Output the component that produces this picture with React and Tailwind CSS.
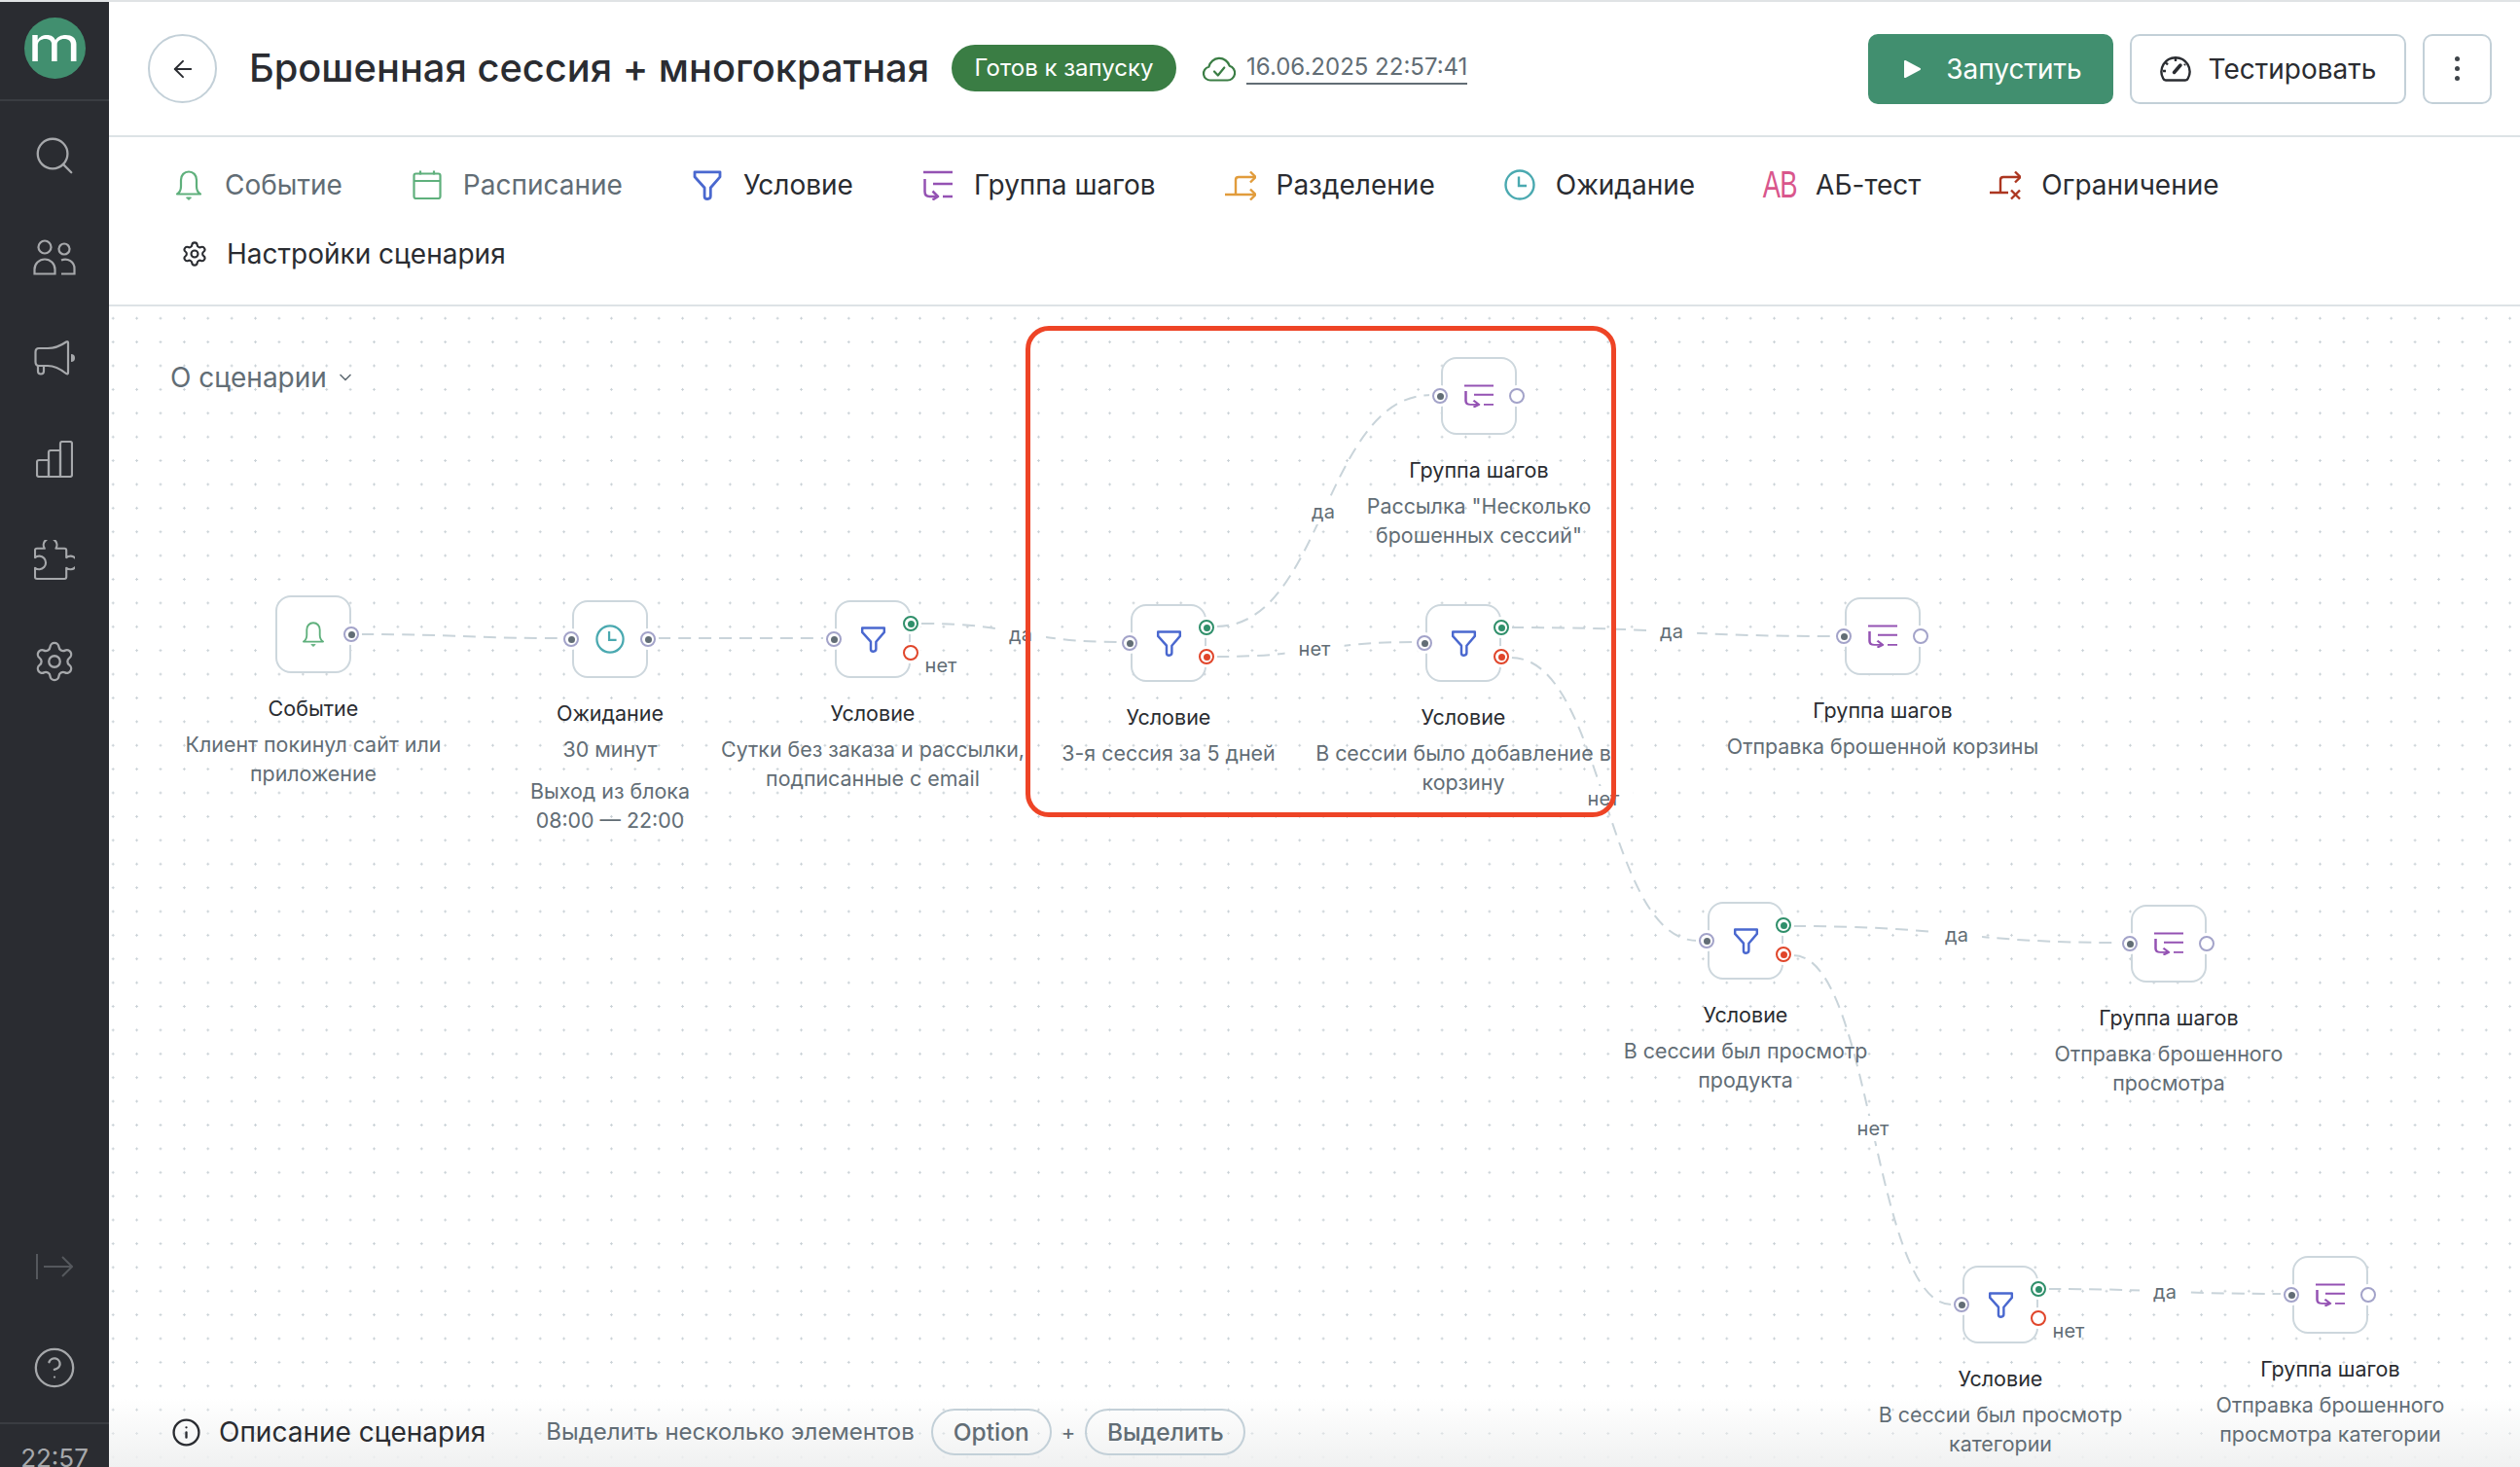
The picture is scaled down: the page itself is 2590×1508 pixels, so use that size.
import { ArrowLeft, ChevronDown, CircleHelp, Info, Search, Settings } from 'lucide-react';

const BellIcon = ({ className }) => (
  <svg viewBox="0 0 28 31" fill="none" stroke="#5fb07c" strokeWidth="2.2" strokeLinejoin="round" className={className}>
    <path d="M2 24.5c2.8-1.6 4-4 4-8V10c0-5 3.4-8.5 8-8.5s8 3.5 8 8.5v6.5c0 4 1.2 6.4 4 8z" />
    <path d="M11.5 28h5L14 30.5z" fill="#5fb07c" strokeWidth="1" />
  </svg>
);

const CalendarIcon = ({ className }) => (
  <svg viewBox="0 0 30 30" fill="none" stroke="#5fb07c" strokeWidth="2.2" className={className}>
    <rect x="1.5" y="3.5" width="27" height="25.5" rx="2" />
    <path d="M1.5 11h27M8 .5v4M22 .5v4" />
  </svg>
);

const FilterIcon = ({ className }) => (
  <svg viewBox="0 0 30 31" fill="none" stroke="#4a68cf" strokeWidth="2.8" strokeLinejoin="round" className={className}>
    <path d="M2 1.8h26v5L18.3 18v8.5q0 3-3.2 3-3 0-3-2.6V18L2 6.8z" />
  </svg>
);

const GroupIcon = ({ className }) => (
  <svg viewBox="0 0 30 31" preserveAspectRatio="none" fill="none" stroke="#9452b3" strokeWidth="2.5" strokeLinejoin="round" className={className}>
    <path d="M0 2h30M10 14h20M20 27h10" />
    <path d="M1.5 9v13q0 5 5 5h8" />
    <path d="M9.5 21.5l5.5 5.5-5.5 3.5" />
  </svg>
);

const SplitIcon = ({ className }) => (
  <svg viewBox="0 0 32 31" fill="none" stroke="#e19c3c" strokeWidth="2.4" className={className}>
    <path d="M0 25h31M11 25V10q0-3 3-3h17" />
    <path d="M26 1.5L31.5 7 26 12.5M26 19.5l5.5 5.5-5.5 5.5" />
  </svg>
);

const ClockIcon = ({ className }) => (
  <svg viewBox="0 0 32 32" fill="none" stroke="#4aa9b0" strokeWidth="2.4" className={className}>
    <circle cx="16" cy="16" r="14.5" />
    <path d="M15 7.5V17h8" />
  </svg>
);

const LimitIcon = ({ className }) => (
  <svg viewBox="0 0 32 31" fill="none" stroke="#ac3620" strokeWidth="2.4" className={className}>
    <path d="M0 23h19M11 23V10q0-3 3-3h17" />
    <path d="M26 1.5L31.5 7 26 12.5M22 20.5l9 9M31 20.5l-9 9" />
  </svg>
);

const CloudCheckIcon = ({ className }) => (
  <svg viewBox="0 0 36 27" fill="none" stroke="#3a7d44" strokeWidth="2.2" strokeLinejoin="round" className={className}>
    <path d="M9.5 25.5h17a7.5 7.5 0 0 0 2.2-14.7A11 11 0 0 0 7.4 11.7 7 7 0 0 0 9.5 25.5z" />
    <path d="M13 16.5l3.8 4 6.5-8" strokeLinecap="round" />
  </svg>
);

const GaugeIcon = ({ className }) => (
  <svg viewBox="0 0 32 27" fill="none" stroke="#2a2c31" strokeWidth="2.4" strokeLinejoin="round" className={className}>
    <path d="M6 25.5h20q2 0 2.8-2A14.5 14.5 0 1 0 3.2 23.5q.8 2 2.8 2z" />
    <path d="M14.5 17.5L21 10" strokeWidth="3.5" strokeLinecap="round" />
    <path d="M16 3v3M6 7.5l2 2M3 16h3M26 9l-1 1" />
  </svg>
);

const UsersIcon = () => (
  <svg viewBox="0 0 44 37" fill="none" stroke="#a6a8ab" strokeWidth="2.2" className="h-[37px] w-[44px]">
    <circle cx="12" cy="8" r="6.5" />
    <circle cx="32" cy="10" r="5.5" />
    <path d="M1.5 35.5V31a10.5 10.5 0 0 1 21 0v4.5z" />
    <path d="M29 21.5a9.5 9.5 0 0 1 13.5 9v5H29" />
  </svg>
);

const MegaphoneIcon = () => (
  <svg viewBox="0 0 42 36" fill="none" stroke="#a6a8ab" strokeWidth="2.2" strokeLinejoin="round" className="h-[36px] w-[42px]">
    <path d="M5 8h9c7 0 14-3 19-6.5q2-1 2 1v30.5q0 2-2 1C28 30 21 26 14 26H5q-3.5 0-3.5-4V12Q1.5 8 5 8z" />
    <path d="M4 26v5.5q0 3 3 3t3-3V26" />
    <path d="M38 14a4 4 0 0 1 0 8z" fill="#a6a8ab" stroke="none" />
  </svg>
);

const ChartIcon = () => (
  <svg viewBox="0 0 38 38" fill="none" stroke="#a6a8ab" strokeWidth="2.2" strokeLinejoin="round" className="h-[38px] w-[38px]">
    <path d="M3 20h10v17H3q-2 0-2-2V22q0-2 2-2z" />
    <path d="M13 12q0-2 2-2h10v27H13z" />
    <path d="M25 3q0-2 2-2h8q2 0 2 2v32q0 2-2 2H25z" />
  </svg>
);

const PuzzleIcon = () => (
  <svg viewBox="0 0 43 43" fill="none" stroke="#a6a8ab" strokeWidth="2.2" strokeLinejoin="round" className="h-[42px] w-[42px]">
    <path d="M3 41h29q2 0 2-2v-9.5a7 7 0 1 0 0-11V11q0-2-2-2h-9a7 7 0 1 0-12 0H3q-2 0-2 2v7.5a7 7 0 1 1 0 11V39q0 2 2 2z" />
  </svg>
);

const CollapseIcon = () => (
  <svg viewBox="0 0 38 26" fill="none" stroke="#55585d" strokeWidth="2" className="h-[26px] w-[38px]">
    <path d="M1 0v26M8 13h29M27 3l10 10-10 10" />
  </svg>
);

const SideItem = ({ children }) => (
  <div className="flex h-[104px] shrink-0 items-center justify-center">{children}</div>
);

const Sidebar = () => (
  <aside className="flex h-full w-[112px] shrink-0 flex-col overflow-hidden bg-[#2a2c31]">
    <div className="mb-[4px] flex h-[102px] shrink-0 items-center justify-center border-b-2 border-[#3a3d42] pb-[6px]">
      <div className="flex h-[63px] w-[63px] items-center justify-center rounded-full bg-[#418f6f] pb-[8px] text-[50px] leading-none font-normal text-white">
        <span className="scale-x-[1.25]">m</span>
      </div>
    </div>
    <SideItem><Search size={46} strokeWidth={1.2} color="#a6a8ab" /></SideItem>
    <SideItem><UsersIcon /></SideItem>
    <SideItem><MegaphoneIcon /></SideItem>
    <SideItem><ChartIcon /></SideItem>
    <SideItem><PuzzleIcon /></SideItem>
    <SideItem><Settings size={46} strokeWidth={1.2} color="#a6a8ab" /></SideItem>
    <div className="mt-auto"><SideItem><CollapseIcon /></SideItem></div>
    <SideItem><CircleHelp size={46} strokeWidth={1.2} color="#a6a8ab" /></SideItem>
    <div className="mt-[4px] h-[46px] shrink-0 border-t-2 border-[#3a3d42] pt-[19px] text-center text-[26px] leading-[32px] text-[#a6a8ab]">
      22:57
    </div>
  </aside>
);

const Header = () => (
  <header className="flex h-[139px] shrink-0 items-center border-b-2 border-[#dde3e6] pr-[29px] pl-[40px]">
    <button className="flex h-[71px] w-[71px] items-center justify-center rounded-full border-2 border-[#c3d0d8]">
      <ArrowLeft size={28} strokeWidth={1.7} color="#2a2c31" />
    </button>
    <h1 className="-mt-[2px] ml-[33px] text-[39.8px] leading-none font-medium whitespace-nowrap text-[#2a2c31]">
      Брошенная сессия + многократная
    </h1>
    <span className="-mt-[1px] ml-[23px] flex h-[48px] w-[231px] items-center justify-center rounded-full bg-[#3a7d44] text-[24px] text-white">
      Готов к запуску
    </span>
    <CloudCheckIcon className="ml-[26px] h-[27px] w-[36px]" />
    <span className="-mt-[2px] ml-[10px] border-b-2 border-[#626d75] text-[24px] leading-[32px] text-[#626d75]">
      16.06.2025 22:57:41
    </span>
    <div className="ml-auto flex gap-[17px]">
      <button className="flex h-[72px] w-[252px] items-center justify-center gap-[25px] rounded-[10px] bg-[#418f6f] pl-[4px] text-[28px] text-white">
        <svg viewBox="0 0 19 20" fill="white" stroke="white" strokeWidth="2" strokeLinejoin="round" className="h-[20px] w-[19px]">
          <path d="M2 2l15 8-15 8z" />
        </svg>
        Запустить
      </button>
      <button className="flex h-[72px] w-[284px] items-center justify-center gap-[18px] rounded-[10px] border-2 border-[#c3d0d8] text-[28px] text-[#2a2c31]">
        <GaugeIcon className="h-[27px] w-[32px]" />
        Тестировать
      </button>
      <button className="flex h-[72px] w-[71px] flex-col items-center justify-center gap-[5px] rounded-[10px] border-2 border-[#c3d0d8]">
        <span className="h-[5px] w-[5px] rounded-full bg-[#3f4449]" />
        <span className="h-[5px] w-[5px] rounded-full bg-[#3f4449]" />
        <span className="h-[5px] w-[5px] rounded-full bg-[#3f4449]" />
      </button>
    </div>
  </header>
);

const tools = [
  { label: 'Событие', icon: <BellIcon className="h-[31px] w-[28px]" />, muted: true },
  { label: 'Расписание', icon: <CalendarIcon className="h-[30px] w-[30px]" />, muted: true },
  { label: 'Условие', icon: <FilterIcon className="h-[31px] w-[30px]" /> },
  { label: 'Группа шагов', icon: <GroupIcon className="h-[31px] w-[30px]" /> },
  { label: 'Разделение', icon: <SplitIcon className="h-[31px] w-[32px]" /> },
  { label: 'Ожидание', icon: <ClockIcon className="h-[32px] w-[32px]" /> },
  {
    label: 'АБ-тест',
    icon: (
      <span className="scale-x-[0.72] font-['Liberation_Sans',sans-serif] text-[38px] leading-none font-normal tracking-[-1px] text-[#d9568c]">
        AB
      </span>
    ),
  },
  { label: 'Ограничение', icon: <LimitIcon className="h-[31px] w-[32px]" /> },
];

const Toolbar = () => (
  <div className="flex h-[174px] shrink-0 flex-wrap content-start gap-x-[71px] gap-y-[39px] border-b-2 border-[#dde3e6] pt-[33px] pl-[66px]">
    {tools.map((tool) => (
      <div key={tool.label} className="flex h-[32px] items-center gap-[21px]">
        <span className="flex h-[32px] w-[32px] items-center justify-center">{tool.icon}</span>
        <span className={`text-[28px] leading-none ${tool.muted ? 'text-[#626d75]' : 'text-[#2a2c31]'}`}>
          {tool.label}
        </span>
      </div>
    ))}
    <div className="flex h-[32px] items-center gap-[19px] pl-[8px]">
      <Settings size={28} strokeWidth={1.8} color="#2a2c31" />
      <span className="text-[28px] leading-none text-[#2a2c31]">Настройки сценария</span>
    </div>
  </div>
);

const filter = <FilterIcon className="h-[27px] w-[27px]" />;
const group = <GroupIcon className="h-[24px] w-[30px]" />;

// x is the center of the block, y its top, both from the canvas corner
const nodes = [
  { x: 210, y: 297, icon: <BellIcon className="h-[26px] w-[24px]" />, title: 'Событие', left: false, right: 'plain', lines: ['Клиент покинул сайт или', 'приложение'] },
  { x: 515, y: 302, icon: <ClockIcon className="h-[30px] w-[30px]" />, title: 'Ожидание', left: true, right: 'plain', lines: ['30 минут'], extra: ['Выход из блока', '08:00 — 22:00'] },
  { x: 785, y: 302, icon: filter, title: 'Условие', left: true, right: 'branch', redEmpty: true, lines: ['Сутки без заказа и рассылки,', 'подписанные с email'] },
  { x: 1089, y: 306, icon: filter, title: 'Условие', left: true, right: 'branch', lines: ['3-я сессия за 5 дней'] },
  { x: 1392, y: 306, icon: filter, title: 'Условие', left: true, right: 'branch', lines: ['В сессии было добавление в', 'корзину'] },
  { x: 1408, y: 52, icon: group, title: 'Группа шагов', left: true, right: 'empty', lines: ['Рассылка "Несколько', 'брошенных сессий"'] },
  { x: 1823, y: 299, icon: group, title: 'Группа шагов', left: true, right: 'empty', lines: ['Отправка брошенной корзины'] },
  { x: 1682, y: 612, icon: filter, title: 'Условие', left: true, right: 'branch', lines: ['В сессии был просмотр', 'продукта'] },
  { x: 2117, y: 615, icon: group, title: 'Группа шагов', left: true, right: 'empty', lines: ['Отправка брошенного', 'просмотра'] },
  { x: 1944, y: 986, icon: filter, title: 'Условие', left: true, right: 'branch', redEmpty: true, lines: ['В сессии был просмотр', 'категории'] },
  { x: 2283, y: 976, icon: group, title: 'Группа шагов', left: true, right: 'empty', lines: ['Отправка брошенного', 'просмотра категории'] },
];

const edges = [
  [259, 337, 466, 341],
  [564, 341, 736, 341],
  [835, 326, 1040, 345],
  [1138, 329, 1359, 91],
  [1138, 360, 1343, 345],
  [1441, 330, 1773, 339],
  [1441, 361, 1633, 652],
  [1731, 637, 2068, 654],
  [1731, 667, 1894, 1026],
  [1993, 1010, 2234, 1015],
];

const labels = [
  { x: 937, y: 337, text: 'да' },
  { x: 855, y: 369, text: 'нет', bare: true },
  { x: 1248, y: 211, text: 'да' },
  { x: 1239, y: 352, text: 'нет' },
  { x: 1606, y: 334, text: 'да' },
  { x: 1536, y: 506, text: 'нет' },
  { x: 1899, y: 646, text: 'да' },
  { x: 1813, y: 845, text: 'нет' },
  { x: 2113, y: 1013, text: 'да' },
  { x: 2014, y: 1053, text: 'нет', bare: true },
];

const Port = ({ color, dot, className }) => (
  <span
    className={`absolute flex h-[16px] w-[16px] items-center justify-center rounded-full border-2 bg-white shadow-[0_0_0_3px_white] ${color} ${className}`}
  >
    {dot && <span className={`h-[7px] w-[7px] rounded-full ${dot}`} />}
  </span>
);

const Node = ({ node }) => (
  <div className="absolute flex w-[400px] flex-col items-center" style={{ left: node.x - 200, top: node.y }}>
    <div className="relative flex h-[80px] w-[78px] items-center justify-center rounded-[16px] border-2 border-[#cdd7dd] bg-white">
      {node.icon}
      {node.left && <Port color="border-[#a3a3c9]" dot="bg-[#626d75]" className="top-[30px] -left-[11px]" />}
      {node.right === 'plain' && <Port color="border-[#a3a3c9]" dot="bg-[#626d75]" className="top-[30px] -right-[10px]" />}
      {node.right === 'empty' && <Port color="border-[#a3a3c9]" className="top-[30px] -right-[10px]" />}
      {node.right === 'branch' && (
        <>
          <Port color="border-[#2f8f6a]" dot="bg-[#2f8f6a]" className="top-[14px] -right-[10px]" />
          <Port color="border-[#e0452a]" dot={node.redEmpty ? null : 'bg-[#e0452a]'} className="top-[44px] -right-[10px]" />
        </>
      )}
    </div>
    <div className="mt-[21px] text-[21.5px] leading-[30px] whitespace-nowrap text-[#2a2c31]">{node.title}</div>
    <div className="mt-[7px] text-center text-[21.4px] leading-[30px] whitespace-nowrap text-[#626d75]">
      {node.lines.map((line) => <div key={line}>{line}</div>)}
      {node.extra && (
        <div className="mt-[13px]">
          {node.extra.map((line) => <div key={line}>{line}</div>)}
        </div>
      )}
    </div>
  </div>
);

const Diagram = () => (
  <>
    <svg className="absolute top-0 left-0 h-full w-full" fill="none" stroke="#c9d4da" strokeWidth="2" strokeDasharray="13 8">
      {edges.map(([x0, y0, x1, y1]) => {
        const mid = (x0 + x1) / 2;
        return <path key={`${x0}-${y0}`} d={`M${x0} ${y0}C${mid} ${y0} ${mid} ${y1} ${x1} ${y1}`} />;
      })}
    </svg>
    {nodes.map((node) => <Node key={`${node.x}-${node.y}`} node={node} />)}
    {labels.map((label) => (
      <span
        key={`${label.x}-${label.y}`}
        className={`absolute -translate-x-1/2 -translate-y-1/2 text-[20px] leading-[26px] text-[#626d75] ${label.bare ? '' : 'bg-white px-[14px]'}`}
        style={{ left: label.x, top: label.y }}
      >
        {label.text}
      </span>
    ))}
    <div className="absolute top-[20px] left-[942px] h-[505px] w-[607px] rounded-[24px] border-[5px] border-[#ee4426]" />
  </>
);

const Canvas = () => (
  <main className="relative flex-1 overflow-hidden bg-[radial-gradient(circle,#c9d1d6_1px,transparent_1.2px)] bg-size-[24.4px_24.4px] bg-position-[-8px_0]">
    <div className="absolute right-0 bottom-0 left-0 h-[70px] bg-gradient-to-b from-transparent to-[#f0f1f1]" />
    <div className="absolute top-[58px] left-[63px] flex items-center gap-[9px] text-[28px] leading-[30px] text-[#626d75]">
      О сценарии
      <ChevronDown size={20} strokeWidth={2} color="#626d75" />
    </div>
    <Diagram />
    <div className="absolute bottom-[12px] left-[64px] flex items-center">
      <Info size={31} strokeWidth={1.8} color="#2a2c31" />
      <span className="ml-[18px] text-[28px] text-[#2a2c31]">Описание сценария</span>
      <span className="ml-[62px] text-[24px] text-[#626d75]">Выделить несколько элементов</span>
      <span className="ml-[17px] flex h-[48px] w-[124px] items-center justify-center rounded-full border-2 border-[#c3d0d8] text-[24.5px] font-medium text-[#626d75]">
        Option
      </span>
      <span className="mx-[10px] text-[22px] text-[#626d75]">+</span>
      <span className="flex h-[48px] w-[165px] items-center justify-center rounded-full border-2 border-[#c3d0d8] text-[24.5px] font-medium text-[#626d75]">
        Выделить
      </span>
    </div>
  </main>
);

const App = () => (
  <div className="flex h-[1508px] w-[2590px] overflow-hidden border-t-2 border-[#e0e3e5] bg-white font-[Inter,sans-serif]">
    <Sidebar />
    <div className="flex min-w-0 flex-1 flex-col">
      <Header />
      <Toolbar />
      <Canvas />
    </div>
  </div>
);

export default App;
